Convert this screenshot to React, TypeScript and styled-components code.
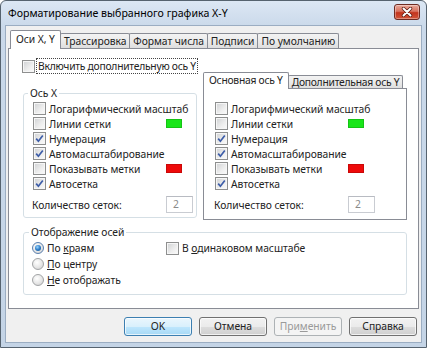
import React from 'react';
import styled, { createGlobalStyle } from 'styled-components';

const GlobalStyle = createGlobalStyle`
  html, body {
    margin: 0;
    padding: 0;
    background: #ffffff;
  }
  body {
    font-family: 'Noto Sans', 'Open Sans', sans-serif;
    font-size: 10.3px;
    letter-spacing: -0.05px;
    color: #222;
  }
  * {
    box-sizing: border-box;
  }
`;

const Window = styled.div`
  width: 427px;
  height: 348px;
  border: 1px solid #56636f;
  border-radius: 6px 6px 0 0;
  background: linear-gradient(180deg, #dce7f4 0%, #cad9ea 26px, #c4d4e6 100%);
  padding: 0 4px 4px;
  display: flex;
  flex-direction: column;
  overflow: hidden;
`;

const TitleBar = styled.div`
  height: 24px;
  flex: none;
  display: flex;
  align-items: flex-start;
  justify-content: space-between;
  padding: 3px 2px 0 3px;
`;

const Title = styled.div`
  font-size: 10.6px;
  letter-spacing: 0;
  line-height: 18px;
  color: #000;
  white-space: nowrap;
`;

const CloseButton = styled.div`
  width: 26px;
  height: 16px;
  border: 1px solid #6d2b22;
  border-radius: 3px;
  background: linear-gradient(180deg, #e9a99b 0%, #d8725f 45%, #c2331c 55%, #d2553a 100%);
  box-shadow: inset 0 0 0 1px rgba(255, 255, 255, 0.35);
  display: flex;
  align-items: center;
  justify-content: center;
`;

const Client = styled.div`
  flex: 1;
  background: #f0f0f0;
  border: 1px solid #9badc2;
  padding: 4px 2px 0 2px;
  display: flex;
  flex-direction: column;
`;

const TabStrip = styled.div`
  height: 18px;
  display: flex;
  align-items: flex-end;
  padding-left: 2px;
  position: relative;
  z-index: 1;
`;

const Tab = styled.div<{ $active?: boolean; $small?: boolean }>`
  height: ${(p) => (p.$active ? (p.$small ? 17 : 19) : p.$small ? 13 : 15)}px;
  margin-bottom: ${(p) => (p.$active ? -1 : 0)}px;
  padding: 0 ${(p) => (p.$active ? 5 : 3)}px;
  border: 1px solid #898c95;
  border-bottom: 0;
  border-radius: 2px 2px 0 0;
  background: ${(p) => (p.$active ? '#ffffff' : 'linear-gradient(180deg, #f3f3f3 0%, #ebebeb 50%, #dedede 100%)')};
  line-height: ${(p) => (p.$active ? (p.$small ? 15 : 17) : p.$small ? 12 : 14)}px;
  letter-spacing: ${(p) => (p.$small ? -0.25 : -0.05)}px;
  white-space: nowrap;
  & + & {
    margin-left: -1px;
  }
`;

const Panel = styled.div`
  height: 261px;
  border: 1px solid #898c95;
  background: #ffffff;
  padding: 9px 0 0 14px;
`;

const TopArea = styled.div`
  display: flex;
  gap: 6px;
  align-items: flex-start;
`;

const LeftCol = styled.div`
  width: 174px;
  display: flex;
  flex-direction: column;
`;

const RightCol = styled.div`
  width: 204px;
  margin-top: 14px;
  display: flex;
  flex-direction: column;
`;

const EnableRow = styled.label`
  height: 16px;
  margin-left: -1px;
  display: flex;
  align-items: center;
  white-space: nowrap;
`;

const FocusText = styled.span`
  margin-left: 1px;
  height: 16px;
  line-height: 14px;
  padding: 0 1px;
  letter-spacing: -0.25px;
  border: 1px dotted #444;
`;

const Group = styled.fieldset<{ $pad: string }>`
  margin: 0;
  padding: ${(p) => p.$pad};
  border: 1px solid #d5dfe5;
  border-radius: 3px;
  min-width: 0;
`;

const Legend = styled.legend<{ $offset: number }>`
  padding: 0 2px;
  margin-left: ${(p) => p.$offset}px;
  line-height: 15px;
  white-space: nowrap;
`;

const XGroup = styled(Group)`
  margin-top: 12px;
`;

const YTabs = styled.div`
  height: 16px;
  display: flex;
  align-items: flex-end;
  position: relative;
  z-index: 1;
`;

const YPanel = styled.div`
  height: 132px;
  border: 1px solid #898c95;
  background: #ffffff;
  padding: 12px 6px 0 11px;
`;

const OptionRow = styled.div`
  height: 15px;
  display: grid;
  grid-template-columns: 133px auto;
  align-items: center;
`;

const CheckLabel = styled.label`
  display: flex;
  align-items: center;
  gap: 3px;
  white-space: nowrap;
`;

const BoxOuter = styled.span`
  width: 13px;
  height: 13px;
  flex: none;
  border: 1px solid #8e8f8f;
  background: linear-gradient(135deg, #cfd1d3 0%, #eeeeee 60%, #fbfbfb 100%);
  box-shadow: inset 0 0 0 1px #f6f6f6;
  display: flex;
  align-items: center;
  justify-content: center;
`;

const Swatch = styled.span<{ $color: string }>`
  width: 16px;
  height: 9px;
  background: ${(p) => p.$color};
  border: 1px solid rgba(0, 0, 0, 0.15);
`;

const CountRow = styled.div`
  margin-top: 5px;
  height: 17px;
  display: grid;
  grid-template-columns: 134px auto;
  align-items: center;
  margin-left: -1px;
`;

const CountInput = styled.div`
  width: 27px;
  height: 17px;
  border: 1px solid #c9ccd2;
  border-top-color: #b8bbc2;
  background: #ffffff;
  color: #8a8a8a;
  line-height: 15px;
  padding-left: 6px;
`;

const DisplayGroup = styled(Group)`
  width: 384px;
  margin-top: 5px;
`;

const DisplayGrid = styled.div`
  display: grid;
  grid-template-columns: 134px auto;
  grid-auto-rows: 16px;
  align-items: center;
`;

const RadioOuter = styled.span<{ $on?: boolean }>`
  width: 12px;
  height: 12px;
  flex: none;
  border-radius: 50%;
  border: 1px solid ${(p) => (p.$on ? '#5a7fae' : '#a2a4a6')};
  background: radial-gradient(circle at 40% 35%, #ffffff 0%, #e6e6e6 55%, #c9cacb 100%);
  display: flex;
  align-items: center;
  justify-content: center;
`;

const RadioDot = styled.span`
  width: 6px;
  height: 6px;
  border-radius: 50%;
  background: radial-gradient(circle at 40% 35%, #9ad6ff 0%, #2d7cc7 50%, #15508f 100%);
`;

const AccessKey = styled.span`
  text-decoration: underline;
`;

const ButtonRow = styled.div`
  margin-top: 8px;
  padding-right: 2px;
  display: flex;
  justify-content: flex-end;
  gap: 7px;
`;

const Button = styled.div<{ $default?: boolean; $disabled?: boolean }>`
  width: 68px;
  height: 19px;
  border-radius: 3px;
  border: 1px solid ${(p) => (p.$default ? '#3c7fb1' : p.$disabled ? '#adb2b5' : '#707070')};
  background: ${(p) =>
    p.$default
      ? 'linear-gradient(180deg, #eaf6fd 0%, #d9f0fc 50%, #bee6fd 51%, #a7d9f5 100%)'
      : p.$disabled
      ? '#f4f4f4'
      : 'linear-gradient(180deg, #f2f2f2 0%, #ebebeb 50%, #dddddd 51%, #cfcfcf 100%)'};
  box-shadow: inset 0 0 0 1px ${(p) => (p.$disabled ? 'transparent' : 'rgba(255,255,255,0.7)')};
  color: ${(p) => (p.$disabled ? '#9a9a9a' : '#222')};
  display: flex;
  align-items: center;
  justify-content: center;
  line-height: 17px;
`;

const CheckMark = () => (
  <svg width="9" height="9" viewBox="0 0 9 9">
    <path d="M1.2 4.6 L3.4 7.2 L7.8 1.4" fill="none" stroke="#3d5da8" strokeWidth="1.7" />
  </svg>
);

const Checkbox: React.FC<{ checked?: boolean }> = ({ checked }) => (
  <BoxOuter>{checked && <CheckMark />}</BoxOuter>
);

const Radio: React.FC<{ on?: boolean }> = ({ on }) => (
  <RadioOuter $on={on}>{on && <RadioDot />}</RadioOuter>
);

interface AxisOption {
  label: string;
  checked: boolean;
  color?: string;
}

const axisOptions: AxisOption[] = [
  { label: 'Логарифмический масштаб', checked: false },
  { label: 'Линии сетки', checked: false, color: '#19e619' },
  { label: 'Нумерация', checked: true },
  { label: 'Автомасштабирование', checked: true },
  { label: 'Показывать метки', checked: false, color: '#ee0a0a' },
  { label: 'Автосетка', checked: true },
];

const AxisOptions = () => (
  <>
    {axisOptions.map((opt) => (
      <OptionRow key={opt.label}>
        <CheckLabel>
          <Checkbox checked={opt.checked} />
          <span>{opt.label}</span>
        </CheckLabel>
        {opt.color && <Swatch $color={opt.color} />}
      </OptionRow>
    ))}
    <CountRow>
      <span>Количество сеток:</span>
      <CountInput>2</CountInput>
    </CountRow>
  </>
);

const mainTabs = ['Оси X, Y', 'Трассировка', 'Формат числа', 'Подписи', 'По умолчанию'];

const App: React.FC = () => {
  return (
    <>
      <GlobalStyle />
      <Window>
        <TitleBar>
          <Title>Форматирование выбранного графика X-Y</Title>
          <CloseButton>
            <svg width="12" height="10" viewBox="0 0 12 10">
              <path d="M2.5 1.5 L9.5 8.5 M9.5 1.5 L2.5 8.5" stroke="#5a1a12" strokeWidth="3.4" strokeLinecap="round" />
              <path d="M2.5 1.5 L9.5 8.5 M9.5 1.5 L2.5 8.5" stroke="#ffffff" strokeWidth="2" strokeLinecap="round" />
            </svg>
          </CloseButton>
        </TitleBar>
        <Client>
          <TabStrip>
            {mainTabs.map((t, i) => (
              <Tab key={t} $active={i === 0}>
                {t}
              </Tab>
            ))}
          </TabStrip>
          <Panel>
            <TopArea>
              <LeftCol>
                <EnableRow>
                  <Checkbox />
                  <FocusText>Включить дополнительную ось Y</FocusText>
                </EnableRow>
                <XGroup $pad="0 6px 4px 9px">
                  <Legend $offset={-5}>Ось X</Legend>
                  <AxisOptions />
                </XGroup>
              </LeftCol>
              <RightCol>
                <YTabs>
                  <Tab $active $small>
                    Основная ось Y
                  </Tab>
                  <Tab $small>Дополнительная ось Y</Tab>
                </YTabs>
                <YPanel>
                  <AxisOptions />
                </YPanel>
              </RightCol>
            </TopArea>
            <DisplayGroup $pad="0 6px 6px 8px">
              <Legend $offset={-3}>Отображение осей</Legend>
              <DisplayGrid>
                <CheckLabel>
                  <Radio on />
                  <span>
                    По <AccessKey>к</AccessKey>раям
                  </span>
                </CheckLabel>
                <CheckLabel>
                  <Checkbox />
                  <span>
                    В <AccessKey>о</AccessKey>динаковом масштабе
                  </span>
                </CheckLabel>
                <CheckLabel>
                  <Radio />
                  <span>
                    <AccessKey>П</AccessKey>о центру
                  </span>
                </CheckLabel>
                <span />
                <CheckLabel>
                  <Radio />
                  <span>
                    <AccessKey>Н</AccessKey>е отображать
                  </span>
                </CheckLabel>
              </DisplayGrid>
            </DisplayGroup>
          </Panel>
          <ButtonRow>
            <Button $default>OK</Button>
            <Button>Отмена</Button>
            <Button $disabled>
              При<AccessKey>м</AccessKey>енить
            </Button>
            <Button>Справка</Button>
          </ButtonRow>
        </Client>
      </Window>
    </>
  );
};

export default App;
